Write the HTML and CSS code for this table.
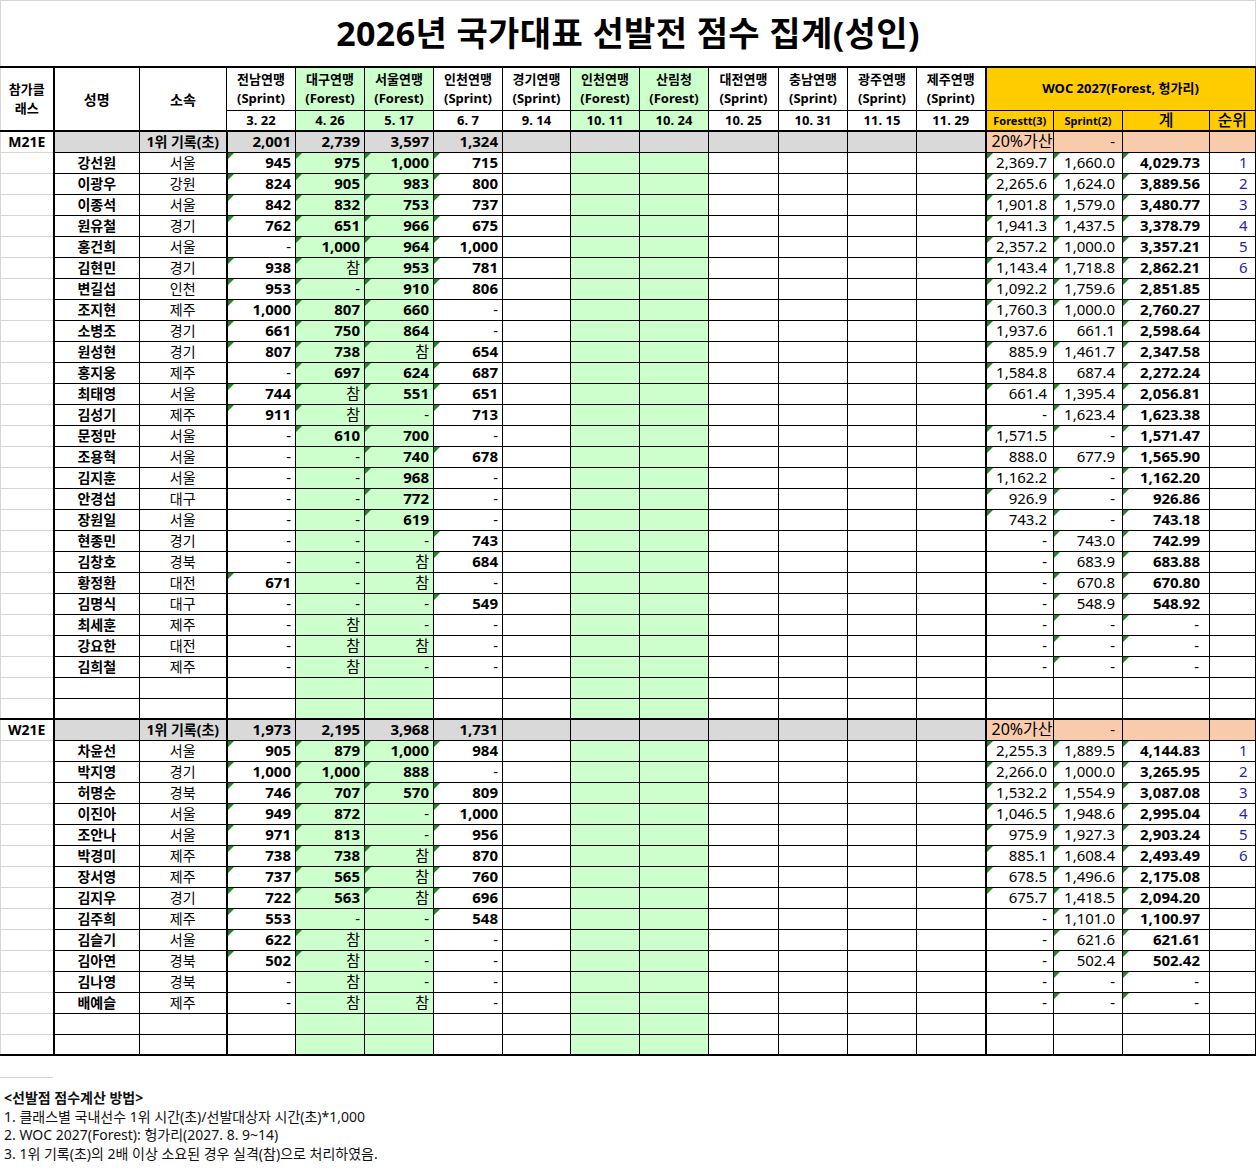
FILE: index.html
```html
<!DOCTYPE html>
<html lang="ko">
<head>
<meta charset="utf-8">
<title>2026년 국가대표 선발전 점수 집계(성인)</title>
<link rel="stylesheet" href="styles.css">
</head>
<body>
<div class="sheet">
  <div class="title">2026년 국가대표 선발전 점수 집계(성인)</div>
  <table class="grid">
    <colgroup>
      <col class="w53"><col class="w86"><col class="w87">
      <col class="w69"><col class="w69 gc"><col class="w69 gc"><col class="w69">
      <col class="w68"><col class="w69 gc"><col class="w69 gc">
      <col class="w70"><col class="w69"><col class="w69"><col class="w69">
      <col class="w68"><col class="w69"><col class="w87"><col class="w47">
    </colgroup>
    <thead>
      <tr class="h1">
        <th class="c1 hcls" rowspan="2">참가클<br>래스</th>
        <th class="hn" rowspan="2">성명</th>
        <th class="hn af" rowspan="2">소속</th>
        <th>전남연맹<br>(Sprint)</th>
        <th>대구연맹<br>(Forest)</th>
        <th>서울연맹<br>(Forest)</th>
        <th>인천연맹<br>(Sprint)</th>
        <th>경기연맹<br>(Sprint)</th>
        <th>인천연맹<br>(Forest)</th>
        <th>산림청<br>(Forest)</th>
        <th>대전연맹<br>(Sprint)</th>
        <th>충남연맹<br>(Sprint)</th>
        <th>광주연맹<br>(Sprint)</th>
        <th>제주연맹<br>(Sprint)</th>
        <th class="woc" colspan="4">WOC 2027(Forest, 헝가리)</th>
      </tr>
      <tr class="h2">
        <th>3. 22</th><th>4. 26</th><th>5. 17</th><th>6. 7</th><th>9. 14</th><th>10. 11</th><th>10. 24</th><th>10. 25</th><th>10. 31</th><th>11. 15</th><th>11. 29</th>
        <th class="wh wsm wl">Forestt(3)</th><th class="wh wsm">Sprint(2)</th><th class="wh wlg">계</th><th class="wh wlg wr">순위</th>
      </tr>
    </thead>
    <tbody>
      <tr class="rec sec"><td class="c1 cls">M21E</td><td></td><td class="af rl">1위 기록(초)</td><td class="n">2,001</td><td class="n">2,739</td><td class="n">3,597</td><td class="n">1,324</td><td></td><td></td><td></td><td></td><td></td><td></td><td></td><td class="wf pe lft">20%가산</td><td class="ws pe">-</td><td class="wt pe"></td><td class="rk pe"></td></tr>
      <tr><td class="c1"></td><td class="nm">강선원</td><td class="af">서울</td><td class="n t">945</td><td class="n t">975</td><td class="n t">1,000</td><td class="n t">715</td><td></td><td></td><td></td><td></td><td></td><td></td><td></td><td class="wf t">2,369.7</td><td class="ws t">1,660.0</td><td class="wt t">4,029.73</td><td class="rk">1</td></tr>
      <tr><td class="c1"></td><td class="nm">이광우</td><td class="af">강원</td><td class="n t">824</td><td class="n t">905</td><td class="n t">983</td><td class="n t">800</td><td></td><td></td><td></td><td></td><td></td><td></td><td></td><td class="wf t">2,265.6</td><td class="ws t">1,624.0</td><td class="wt t">3,889.56</td><td class="rk">2</td></tr>
      <tr><td class="c1"></td><td class="nm">이종석</td><td class="af">서울</td><td class="n t">842</td><td class="n t">832</td><td class="n t">753</td><td class="n t">737</td><td></td><td></td><td></td><td></td><td></td><td></td><td></td><td class="wf t">1,901.8</td><td class="ws t">1,579.0</td><td class="wt t">3,480.77</td><td class="rk">3</td></tr>
      <tr><td class="c1"></td><td class="nm">원유철</td><td class="af">경기</td><td class="n t">762</td><td class="n t">651</td><td class="n t">966</td><td class="n t">675</td><td></td><td></td><td></td><td></td><td></td><td></td><td></td><td class="wf t">1,941.3</td><td class="ws t">1,437.5</td><td class="wt t">3,378.79</td><td class="rk">4</td></tr>
      <tr><td class="c1"></td><td class="nm">홍건희</td><td class="af">서울</td><td class="d">-</td><td class="n t">1,000</td><td class="n t">964</td><td class="n t">1,000</td><td></td><td></td><td></td><td></td><td></td><td></td><td></td><td class="wf t">2,357.2</td><td class="ws t">1,000.0</td><td class="wt t">3,357.21</td><td class="rk">5</td></tr>
      <tr><td class="c1"></td><td class="nm">김현민</td><td class="af">경기</td><td class="n t">938</td><td class="j t">참</td><td class="n t">953</td><td class="n t">781</td><td></td><td></td><td></td><td></td><td></td><td></td><td></td><td class="wf t">1,143.4</td><td class="ws t">1,718.8</td><td class="wt t">2,862.21</td><td class="rk">6</td></tr>
      <tr><td class="c1"></td><td class="nm">변길섭</td><td class="af">인천</td><td class="n t">953</td><td class="d t">-</td><td class="n t">910</td><td class="n t">806</td><td></td><td></td><td></td><td></td><td></td><td></td><td></td><td class="wf t">1,092.2</td><td class="ws t">1,759.6</td><td class="wt t">2,851.85</td><td class="rk"></td></tr>
      <tr><td class="c1"></td><td class="nm">조지현</td><td class="af">제주</td><td class="n t">1,000</td><td class="n t">807</td><td class="n t">660</td><td class="d">-</td><td></td><td></td><td></td><td></td><td></td><td></td><td></td><td class="wf t">1,760.3</td><td class="ws t">1,000.0</td><td class="wt t">2,760.27</td><td class="rk"></td></tr>
      <tr><td class="c1"></td><td class="nm">소병조</td><td class="af">경기</td><td class="n t">661</td><td class="n t">750</td><td class="n t">864</td><td class="d">-</td><td></td><td></td><td></td><td></td><td></td><td></td><td></td><td class="wf t">1,937.6</td><td class="ws">661.1</td><td class="wt t">2,598.64</td><td class="rk"></td></tr>
      <tr><td class="c1"></td><td class="nm">원성현</td><td class="af">경기</td><td class="n t">807</td><td class="n t">738</td><td class="j t">참</td><td class="n t">654</td><td></td><td></td><td></td><td></td><td></td><td></td><td></td><td class="wf t">885.9</td><td class="ws t">1,461.7</td><td class="wt t">2,347.58</td><td class="rk"></td></tr>
      <tr><td class="c1"></td><td class="nm">홍지웅</td><td class="af">제주</td><td class="d">-</td><td class="n t">697</td><td class="n t">624</td><td class="n t">687</td><td></td><td></td><td></td><td></td><td></td><td></td><td></td><td class="wf t">1,584.8</td><td class="ws">687.4</td><td class="wt t">2,272.24</td><td class="rk"></td></tr>
      <tr><td class="c1"></td><td class="nm">최태영</td><td class="af">서울</td><td class="n t">744</td><td class="j t">참</td><td class="n t">551</td><td class="n t">651</td><td></td><td></td><td></td><td></td><td></td><td></td><td></td><td class="wf t">661.4</td><td class="ws t">1,395.4</td><td class="wt t">2,056.81</td><td class="rk"></td></tr>
      <tr><td class="c1"></td><td class="nm">김성기</td><td class="af">제주</td><td class="n t">911</td><td class="j t">참</td><td class="d">-</td><td class="n t">713</td><td></td><td></td><td></td><td></td><td></td><td></td><td></td><td class="wf">-</td><td class="ws t">1,623.4</td><td class="wt t">1,623.38</td><td class="rk"></td></tr>
      <tr><td class="c1"></td><td class="nm">문정만</td><td class="af">서울</td><td class="d">-</td><td class="n t">610</td><td class="n t">700</td><td class="d">-</td><td></td><td></td><td></td><td></td><td></td><td></td><td></td><td class="wf t">1,571.5</td><td class="ws t">-</td><td class="wt t">1,571.47</td><td class="rk"></td></tr>
      <tr><td class="c1"></td><td class="nm">조용혁</td><td class="af">서울</td><td class="d">-</td><td class="d">-</td><td class="n t">740</td><td class="n t">678</td><td></td><td></td><td></td><td></td><td></td><td></td><td></td><td class="wf t">888.0</td><td class="ws">677.9</td><td class="wt t">1,565.90</td><td class="rk"></td></tr>
      <tr><td class="c1"></td><td class="nm">김지훈</td><td class="af">서울</td><td class="d">-</td><td class="d">-</td><td class="n t">968</td><td class="d">-</td><td></td><td></td><td></td><td></td><td></td><td></td><td></td><td class="wf t">1,162.2</td><td class="ws t">-</td><td class="wt t">1,162.20</td><td class="rk"></td></tr>
      <tr><td class="c1"></td><td class="nm">안경섭</td><td class="af">대구</td><td class="d">-</td><td class="d">-</td><td class="n t">772</td><td class="d">-</td><td></td><td></td><td></td><td></td><td></td><td></td><td></td><td class="wf t">926.9</td><td class="ws t">-</td><td class="wt t">926.86</td><td class="rk"></td></tr>
      <tr><td class="c1"></td><td class="nm">장원일</td><td class="af">서울</td><td class="d">-</td><td class="d">-</td><td class="n t">619</td><td class="d">-</td><td></td><td></td><td></td><td></td><td></td><td></td><td></td><td class="wf t">743.2</td><td class="ws t">-</td><td class="wt t">743.18</td><td class="rk"></td></tr>
      <tr><td class="c1"></td><td class="nm">현종민</td><td class="af">경기</td><td class="d">-</td><td class="d">-</td><td class="d">-</td><td class="n t">743</td><td></td><td></td><td></td><td></td><td></td><td></td><td></td><td class="wf">-</td><td class="ws t">743.0</td><td class="wt t">742.99</td><td class="rk"></td></tr>
      <tr><td class="c1"></td><td class="nm">김창호</td><td class="af">경북</td><td class="d">-</td><td class="d">-</td><td class="j">참</td><td class="n t">684</td><td></td><td></td><td></td><td></td><td></td><td></td><td></td><td class="wf">-</td><td class="ws t">683.9</td><td class="wt t">683.88</td><td class="rk"></td></tr>
      <tr><td class="c1"></td><td class="nm">황정환</td><td class="af">대전</td><td class="n t">671</td><td class="d">-</td><td class="j">참</td><td class="d">-</td><td></td><td></td><td></td><td></td><td></td><td></td><td></td><td class="wf">-</td><td class="ws t">670.8</td><td class="wt t">670.80</td><td class="rk"></td></tr>
      <tr><td class="c1"></td><td class="nm">김명식</td><td class="af">대구</td><td class="d">-</td><td class="d">-</td><td class="d">-</td><td class="n t">549</td><td></td><td></td><td></td><td></td><td></td><td></td><td></td><td class="wf">-</td><td class="ws t">548.9</td><td class="wt t">548.92</td><td class="rk"></td></tr>
      <tr><td class="c1"></td><td class="nm">최세훈</td><td class="af">제주</td><td class="d">-</td><td class="j">참</td><td class="d">-</td><td class="d">-</td><td></td><td></td><td></td><td></td><td></td><td></td><td></td><td class="wf">-</td><td class="ws t">-</td><td class="wt wd t">-</td><td class="rk"></td></tr>
      <tr><td class="c1"></td><td class="nm">강요한</td><td class="af">대전</td><td class="d">-</td><td class="j">참</td><td class="j">참</td><td class="d">-</td><td></td><td></td><td></td><td></td><td></td><td></td><td></td><td class="wf">-</td><td class="ws t">-</td><td class="wt wd t">-</td><td class="rk"></td></tr>
      <tr><td class="c1"></td><td class="nm">김희철</td><td class="af">제주</td><td class="d">-</td><td class="j">참</td><td class="d">-</td><td class="d">-</td><td></td><td></td><td></td><td></td><td></td><td></td><td></td><td class="wf">-</td><td class="ws t">-</td><td class="wt wd t">-</td><td class="rk"></td></tr>
      <tr><td class="c1"></td><td></td><td class="af"></td><td></td><td></td><td></td><td></td><td></td><td></td><td></td><td></td><td></td><td></td><td></td><td class="wf"></td><td class="ws"></td><td class="wt"></td><td class="rk"></td></tr>
      <tr><td class="c1"></td><td></td><td class="af"></td><td></td><td></td><td></td><td></td><td></td><td></td><td></td><td></td><td></td><td></td><td></td><td class="wf"></td><td class="ws"></td><td class="wt"></td><td class="rk"></td></tr>

      <tr class="rec sec"><td class="c1 cls">W21E</td><td></td><td class="af rl">1위 기록(초)</td><td class="n">1,973</td><td class="n">2,195</td><td class="n">3,968</td><td class="n">1,731</td><td></td><td></td><td></td><td></td><td></td><td></td><td></td><td class="wf pe lft">20%가산</td><td class="ws pe">-</td><td class="wt pe"></td><td class="rk pe"></td></tr>
      <tr><td class="c1"></td><td class="nm">차윤선</td><td class="af">서울</td><td class="n t">905</td><td class="n t">879</td><td class="n t">1,000</td><td class="n t">984</td><td></td><td></td><td></td><td></td><td></td><td></td><td></td><td class="wf t">2,255.3</td><td class="ws t">1,889.5</td><td class="wt t">4,144.83</td><td class="rk">1</td></tr>
      <tr><td class="c1"></td><td class="nm">박지영</td><td class="af">경기</td><td class="n t">1,000</td><td class="n t">1,000</td><td class="n t">888</td><td class="d">-</td><td></td><td></td><td></td><td></td><td></td><td></td><td></td><td class="wf t">2,266.0</td><td class="ws t">1,000.0</td><td class="wt t">3,265.95</td><td class="rk">2</td></tr>
      <tr><td class="c1"></td><td class="nm">허명순</td><td class="af">경북</td><td class="n t">746</td><td class="n t">707</td><td class="n t">570</td><td class="n t">809</td><td></td><td></td><td></td><td></td><td></td><td></td><td></td><td class="wf t">1,532.2</td><td class="ws t">1,554.9</td><td class="wt t">3,087.08</td><td class="rk">3</td></tr>
      <tr><td class="c1"></td><td class="nm">이진아</td><td class="af">서울</td><td class="n t">949</td><td class="n t">872</td><td class="d">-</td><td class="n t">1,000</td><td></td><td></td><td></td><td></td><td></td><td></td><td></td><td class="wf t">1,046.5</td><td class="ws t">1,948.6</td><td class="wt t">2,995.04</td><td class="rk">4</td></tr>
      <tr><td class="c1"></td><td class="nm">조안나</td><td class="af">서울</td><td class="n t">971</td><td class="n t">813</td><td class="d">-</td><td class="n t">956</td><td></td><td></td><td></td><td></td><td></td><td></td><td></td><td class="wf t">975.9</td><td class="ws t">1,927.3</td><td class="wt t">2,903.24</td><td class="rk">5</td></tr>
      <tr><td class="c1"></td><td class="nm">박경미</td><td class="af">제주</td><td class="n t">738</td><td class="n t">738</td><td class="j t">참</td><td class="n t">870</td><td></td><td></td><td></td><td></td><td></td><td></td><td></td><td class="wf t">885.1</td><td class="ws t">1,608.4</td><td class="wt t">2,493.49</td><td class="rk">6</td></tr>
      <tr><td class="c1"></td><td class="nm">장서영</td><td class="af">제주</td><td class="n t">737</td><td class="n t">565</td><td class="j t">참</td><td class="n t">760</td><td></td><td></td><td></td><td></td><td></td><td></td><td></td><td class="wf t">678.5</td><td class="ws t">1,496.6</td><td class="wt t">2,175.08</td><td class="rk"></td></tr>
      <tr><td class="c1"></td><td class="nm">김지우</td><td class="af">경기</td><td class="n t">722</td><td class="n t">563</td><td class="j t">참</td><td class="n t">696</td><td></td><td></td><td></td><td></td><td></td><td></td><td></td><td class="wf t">675.7</td><td class="ws t">1,418.5</td><td class="wt t">2,094.20</td><td class="rk"></td></tr>
      <tr><td class="c1"></td><td class="nm">김주희</td><td class="af">제주</td><td class="n t">553</td><td class="d">-</td><td class="d">-</td><td class="n t">548</td><td></td><td></td><td></td><td></td><td></td><td></td><td></td><td class="wf">-</td><td class="ws t">1,101.0</td><td class="wt t">1,100.97</td><td class="rk"></td></tr>
      <tr><td class="c1"></td><td class="nm">김슬기</td><td class="af">서울</td><td class="n t">622</td><td class="j t">참</td><td class="d">-</td><td class="d">-</td><td></td><td></td><td></td><td></td><td></td><td></td><td></td><td class="wf">-</td><td class="ws t">621.6</td><td class="wt t">621.61</td><td class="rk"></td></tr>
      <tr><td class="c1"></td><td class="nm">김아연</td><td class="af">경북</td><td class="n t">502</td><td class="j t">참</td><td class="d">-</td><td class="d">-</td><td></td><td></td><td></td><td></td><td></td><td></td><td></td><td class="wf">-</td><td class="ws t">502.4</td><td class="wt t">502.42</td><td class="rk"></td></tr>
      <tr><td class="c1"></td><td class="nm">김나영</td><td class="af">경북</td><td class="d">-</td><td class="j">참</td><td class="d">-</td><td class="d">-</td><td></td><td></td><td></td><td></td><td></td><td></td><td></td><td class="wf">-</td><td class="ws t">-</td><td class="wt wd t">-</td><td class="rk"></td></tr>
      <tr><td class="c1"></td><td class="nm">배예슬</td><td class="af">제주</td><td class="d">-</td><td class="j">참</td><td class="j">참</td><td class="d">-</td><td></td><td></td><td></td><td></td><td></td><td></td><td></td><td class="wf">-</td><td class="ws t">-</td><td class="wt wd t">-</td><td class="rk"></td></tr>
      <tr><td class="c1"></td><td></td><td class="af"></td><td></td><td></td><td></td><td></td><td></td><td></td><td></td><td></td><td></td><td></td><td></td><td class="wf"></td><td class="ws"></td><td class="wt"></td><td class="rk"></td></tr>
      <tr class="last"><td class="c1"></td><td></td><td class="af"></td><td></td><td></td><td></td><td></td><td></td><td></td><td></td><td></td><td></td><td></td><td></td><td class="wf"></td><td class="ws"></td><td class="wt"></td><td class="rk"></td></tr>
    </tbody>
  </table>
  <div class="notes">
    <div class="stub"></div>
    <p class="nt-head">&lt;선발점 점수계산 방법&gt;</p>
    <p>1. 클래스별 국내선수 1위 시간(초)/선발대상자 시간(초)*1,000</p>
    <p>2. WOC 2027(Forest): 헝가리(2027. 8. 9~14)</p>
    <p>3. 1위 기록(초)의 2배 이상 소요된 경우 실격(참)으로 처리하였음.</p>
  </div>
</div>
</body>
</html>
```

FILE: styles.css
```css
* { box-sizing: border-box; }

body {
  margin: 0;
  background: #fff;
  color: #000;
  font-family: "Noto Sans", "Noto Sans CJK KR", sans-serif;
}

.sheet {
  width: 1256px;
}

.title {
  height: 66px;
  border-top: 1px solid #d6d6d6;
  border-left: 1px solid #d6d6d6;
  border-right: 1px solid #d6d6d6;
  display: flex;
  align-items: center;
  justify-content: center;
  font-family: "Noto Sans", "Noto Sans CJK KR", sans-serif;
  font-size: 34px;
  font-weight: 700;
  letter-spacing: 0.4px;
  padding-bottom: 5px;
}

/* grid */
.grid {
  border-collapse: collapse;
  table-layout: fixed;
  width: 1256px;
}

.w53 { width: 53px; }
.w86 { width: 86px; }
.w87 { width: 87px; }
.w69 { width: 69px; }
.w68 { width: 68px; }
.w70 { width: 70px; }
.w47 { width: 46px; }
.gc { background: #ccffcc; }

.grid th,
.grid td {
  border: 1px solid #000;
  padding: 0 4px 0 0;
  height: 21px;
  line-height: 19px;
  font-size: 15px;
  white-space: nowrap;
  overflow: hidden;
  text-align: right;
  vertical-align: middle;
  position: relative;
}

/* header */
.grid th {
  font-size: 13px;
  font-weight: 700;
  text-align: center;
  padding: 0;
  line-height: 19px;
}
.grid .h1 th {
  height: 43px;
  border-top: 2px solid #000;
}
.grid .h2 th {
  border-bottom: 2px solid #000;
}
.grid th.hcls {
  border-top: 2px solid #000;
  border-left: 1px solid #d6d6d6;
  border-bottom: 2px solid #000;
  font-size: 13px;
}
.grid th.hn {
  font-size: 14px;
  border-bottom: 2px solid #000;
}
.grid th.woc {
  background: #ffcc00;
  border-left: 2px solid #000;
  border-right: 2px solid #000;
  font-size: 13px;
}
.grid th.wh { background: #ffcc00; }
.grid th.wsm { font-size: 11px; }
.grid th.wlg { font-size: 16px; font-weight: 500; }
.grid th.wl { border-left: 2px solid #000; }
.grid th.wr { border-right: 2px solid #000; }

/* first column: spreadsheet gridlines */
.grid .c1 {
  border-top: 1px solid #d6d6d6;
  border-bottom: 1px solid #d6d6d6;
  border-left: 1px solid #d6d6d6;
  border-right: 2px solid #000;
  background: #fff;
  text-align: center;
  padding: 0;
}
.grid td.cls {
  font-size: 14px;
  font-weight: 700;
}

/* section rows */
.rec { background: #d9d9d9; }
.grid .sec > td,
.grid .sec > td.c1 { border-top: 2px solid #000; }
.grid .last > td,
.grid .last > td.c1 { border-bottom: 2px solid #000; }

.grid td.nm {
  text-align: center;
  font-weight: 700;
  font-size: 14px;
  padding: 0;
}
.grid td.af {
  text-align: center;
  font-size: 14px;
  padding: 0;
  border-right: 2px solid #000;
}
.grid td.rl {
  font-weight: 700;
  font-size: 14px;
}

.grid td.n { font-weight: 700; }
.grid td.d,
.grid td.j { font-weight: 400; }

/* WOC block */
.grid td.wf {
  border-left: 2px solid #000;
  padding-right: 6px;
}
.grid td.ws { padding-right: 7px; }
.grid td.wt {
  font-weight: 700;
  padding-right: 9px;
}
.grid td.wd { font-weight: 400; padding-right: 10px; }
.grid td.rk {
  color: #2323b8;
  padding-right: 7px;
  border-right: 2px solid #000;
}
.grid td.pe { background: #f8cbad; }
.grid td.lft {
  text-align: left;
  padding-left: 5px;
  font-size: 16px;
}

/* green "number stored as text" marker */
.grid td.t::before {
  content: "";
  position: absolute;
  top: 0;
  left: 0;
  border-top: 6px solid #1d8a1d;
  border-right: 6px solid transparent;
}

/* notes */
.notes {
  padding: 21px 0 0 0;
  font-size: 14px;
  line-height: 18.7px;
  color: #111;
}
.stub {
  width: 53px;
  height: 1px;
  background: #d6d6d6;
  margin-bottom: 11px;
}
.notes p {
  margin: 0;
  padding-left: 4px;
}
.notes .nt-head {
  font-weight: 700;
}
```
